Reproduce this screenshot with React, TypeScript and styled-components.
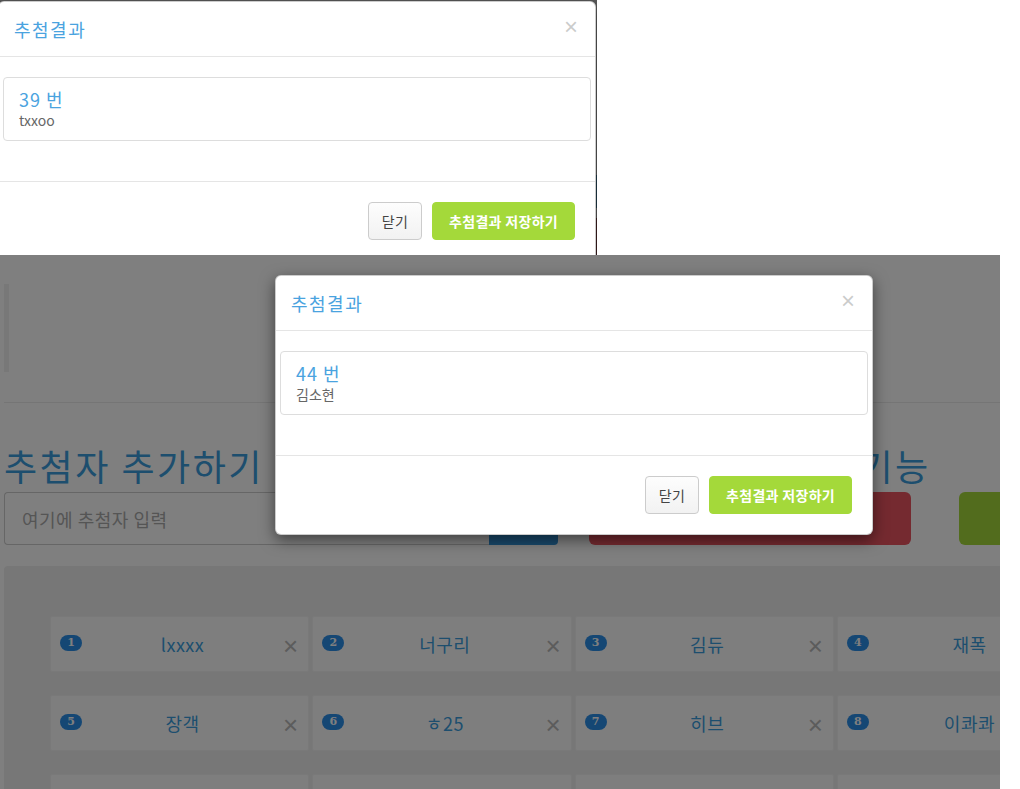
import React from 'react'
import styled, { createGlobalStyle } from 'styled-components'

const GlobalStyle = createGlobalStyle`
    html, body {
        margin: 0;
        padding: 0;
        background: #ffffff;
    }
    * {
        box-sizing: border-box;
    }
    body {
        font-family: 'Noto Sans CJK KR', 'Noto Sans', sans-serif;
    }
`

const Root = styled.div`
    width: 1020px;
    height: 789px;
    overflow: hidden;
    background: #fff;
    display: flex;
    flex-direction: column;
`

// first capture: the result dialog, cropped
const TopShot = styled.div`
    width: 597px;
    height: 255px;
    overflow: hidden;
    padding-top: 1px;
    background: linear-gradient(
        to bottom,
        #5a5a5a 0,
        #5a5a5a 175px,
        #1f3b4a 175px,
        #1f3b4a 208px,
        #5a5a5a 208px,
        #5a5a5a 218px,
        #3d1d1f 218px
    );
    & > div {
        margin-left: -2px;
    }
`

// second capture: the page behind a backdrop
const BottomShot = styled.div`
    position: relative;
    width: 1000px;
    height: 534px;
    overflow: hidden;
    background: #fff;
`

const Dialog = styled.div`
    width: 598px;
    background: #fff;
    border: 1px solid rgba(0, 0, 0, 0.2);
    border-radius: 6px;
    box-shadow: 0 5px 15px rgba(0, 0, 0, 0.5);
`

const DialogHeader = styled.div`
    display: flex;
    align-items: center;
    justify-content: space-between;
    padding: 14px 15px;
    border-bottom: 1px solid #e5e5e5;
`

const DialogTitle = styled.h4`
    margin: 0;
    font-size: 18px;
    line-height: 26px;
    font-weight: 400;
    letter-spacing: 1.5px;
    color: #4aa3df;
`

const CloseButton = styled.button`
    border: 0;
    background: none;
    padding: 0 2px 0 0;
    margin-top: -4px;
    font-family: 'Liberation Sans', Arial, sans-serif;
    font-size: 24px;
    font-weight: 400;
    line-height: 1;
    color: #000;
    opacity: 0.2;
    cursor: pointer;
`

const DialogBody = styled.div`
    padding: 20px 4px 40px;
`

const ResultCard = styled.div`
    border: 1px solid #ddd;
    border-radius: 4px;
    padding: 10px 15px;
`

const ResultNumber = styled.div`
    font-size: 18px;
    line-height: 22px;
    letter-spacing: 1px;
    color: #4aa3df;
`

const ResultName = styled.div`
    font-size: 14px;
    line-height: 20px;
    color: #666;
`

const DialogFooter = styled.div`
    display: flex;
    justify-content: flex-end;
    gap: 10px;
    padding: 20px;
    border-top: 1px solid #e5e5e5;
`

const FooterButton = styled.button<{ $primary?: boolean }>`
    height: 38px;
    padding: 0 ${(p) => (p.$primary ? '16px' : '13px')};
    border-radius: 4px;
    font-family: inherit;
    font-size: 14px;
    letter-spacing: 0.3px;
    font-weight: ${(p) => (p.$primary ? 700 : 400)};
    border: 1px solid ${(p) => (p.$primary ? '#a4d93a' : '#ccc')};
    background: ${(p) => (p.$primary ? '#a4d93a' : 'linear-gradient(#fdfdfd, #f2f2f2)')};
    color: ${(p) => (p.$primary ? '#fff' : '#444')};
    cursor: pointer;
`

const Page = styled.div`
    width: 1100px;
    padding-left: 4px;
`

const Lead = styled.div`
    margin-top: 29px;
    height: 88px;
    width: 5px;
    background: #f0f0f0;
`

const Rule = styled.hr`
    margin: 30px 0 0;
    border: 0;
    border-top: 1px solid #eaeaea;
`

const Columns = styled.div`
    display: grid;
    grid-template-columns: 554px 1fr;
    column-gap: 31px;
`

const Heading = styled.h2`
    margin: 40px 0 5px;
    font-size: 36px;
    line-height: 44px;
    font-weight: 400;
    letter-spacing: 2.5px;
    color: #3b9ddd;
    white-space: nowrap;
`

const InputGroup = styled.div`
    display: flex;
    height: 53px;
`

const NameInput = styled.input`
    flex: 1;
    height: 53px;
    border: 1px solid #ccc;
    border-right: 0;
    border-radius: 4px 0 0 4px;
    padding: 0 17px;
    font-family: inherit;
    font-size: 18px;
    letter-spacing: 0.5px;
    &::placeholder {
        color: #aaa;
    }
`

const AddButton = styled.button`
    width: 69px;
    border: 0;
    border-radius: 0 4px 4px 0;
    background: #3393d9;
`

const ActionRow = styled.div`
    display: flex;
    gap: 48px;
    height: 53px;
`

const ActionButton = styled.button<{ $color: string; $width: number }>`
    width: ${(p) => p.$width}px;
    height: 53px;
    border: 0;
    border-radius: 6px;
    background: ${(p) => p.$color};
`

const ChipPanel = styled.div`
    margin-top: 21px;
    height: 300px;
    background: #eeeeee;
    border-radius: 4px;
    padding: 50px 0 0 46px;
    display: grid;
    grid-template-columns: repeat(4, 259.3px);
    grid-auto-rows: 56px;
    gap: 23px 3px;
`

const Chip = styled.div`
    display: flex;
    align-items: center;
    padding: 0 10px 0 9px;
    background: #fdfdfd;
    border: 1px solid #f3f3f3;
    border-radius: 2px;
`

const Badge = styled.span`
    width: 22px;
    height: 16px;
    border-radius: 8px;
    margin-bottom: 3px;
    background: #2a8ee8;
    color: #fff;
    font-family: 'DejaVu Serif', serif;
    font-size: 11px;
    font-weight: 700;
    display: flex;
    align-items: center;
    justify-content: center;
`

const ChipLabel = styled.span`
    flex: 1;
    text-align: center;
    font-size: 18px;
    letter-spacing: 0.5px;
    color: #3b9ddd;
`

const ChipRemove = styled.span`
    margin-top: 4px;
    font-family: 'Liberation Sans', Arial, sans-serif;
    font-size: 26px;
    line-height: 1;
    color: #b8b8b8;
`

const Backdrop = styled.div`
    position: absolute;
    inset: 0;
    background: rgba(0, 0, 0, 0.5);
`

const ModalSlot = styled.div`
    position: absolute;
    left: 275px;
    top: 20px;
`

const entrants = ['lxxxx', '너구리', '김듀', '재폭', '장객', 'ㅎ25', '히브', '이콰콰', '민트', '하랑', '초코', '별빛']

const ResultModal = ({ number, name }: { number: number; name: string }) => (
    <Dialog>
        <DialogHeader>
            <DialogTitle>추첨결과</DialogTitle>
            <CloseButton>×</CloseButton>
        </DialogHeader>
        <DialogBody>
            <ResultCard>
                <ResultNumber>{number} 번</ResultNumber>
                <ResultName>{name}</ResultName>
            </ResultCard>
        </DialogBody>
        <DialogFooter>
            <FooterButton>닫기</FooterButton>
            <FooterButton $primary>추첨결과 저장하기</FooterButton>
        </DialogFooter>
    </Dialog>
)

const App = () => {
    return (
        <>
            <GlobalStyle />
            <Root>
                <TopShot>
                    <ResultModal number={39} name="txxoo" />
                </TopShot>
                <BottomShot>
                    <Page>
                        <Lead />
                        <Rule />
                        <Columns>
                            <div>
                                <Heading>추첨자 추가하기</Heading>
                                <InputGroup>
                                    <NameInput placeholder="여기에 추첨자 입력" />
                                    <AddButton />
                                </InputGroup>
                            </div>
                            <div>
                                <Heading>추첨하기 및 부가기능</Heading>
                                <ActionRow>
                                    <ActionButton $color="#ea5561" $width={322} />
                                    <ActionButton $color="#a4d93a" $width={200} />
                                </ActionRow>
                            </div>
                        </Columns>
                        <ChipPanel>
                            {entrants.map((item, index) => (
                                <Chip key={index}>
                                    <Badge>{index + 1}</Badge>
                                    <ChipLabel>{item}</ChipLabel>
                                    <ChipRemove>×</ChipRemove>
                                </Chip>
                            ))}
                        </ChipPanel>
                    </Page>
                    <Backdrop />
                    <ModalSlot>
                        <ResultModal number={44} name="김소현" />
                    </ModalSlot>
                </BottomShot>
            </Root>
        </>
    )
}

export default App
